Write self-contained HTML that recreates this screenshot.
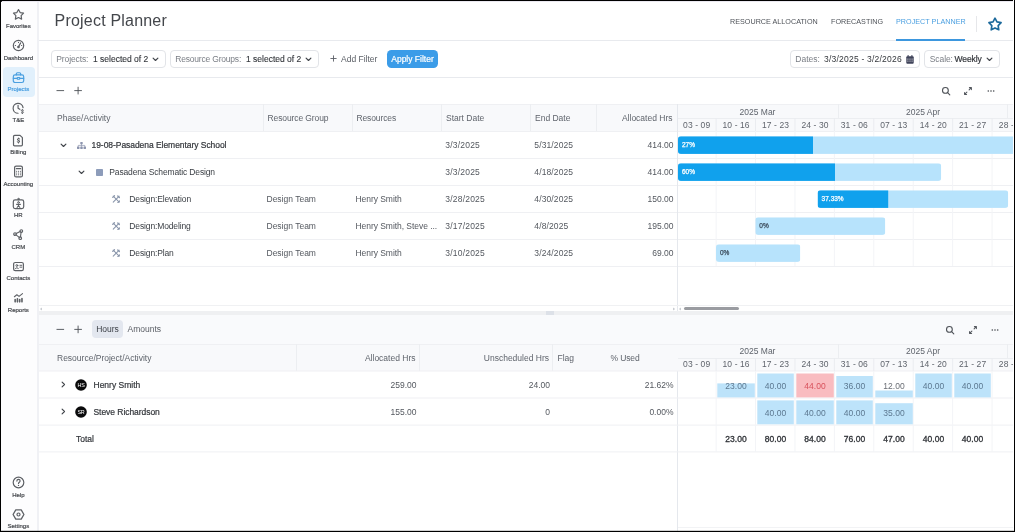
<!DOCTYPE html>
<html>
<head>
<meta charset="utf-8">
<title>Project Planner</title>
<style>
*{box-sizing:border-box;margin:0;padding:0}
html,body{width:1015px;height:532px;overflow:hidden;background:#fff}
body{font-family:"Liberation Sans",sans-serif;color:#3c4043;position:relative}
.a{position:absolute}
#app{position:absolute;left:0;top:0;width:1015px;height:532px;background:#fff;overflow:hidden;will-change:transform}
#side{position:absolute;left:0;top:0;width:39px;height:532px;background:#fdfdfe;border-right:2px solid #f0f1f5}
.si{position:absolute;left:1px;width:36px;height:31px}
.si svg{position:absolute;left:11.1px;top:2.7px;width:13px;height:13px;stroke:#5d6065;fill:none;stroke-width:1.1;stroke-linecap:round;stroke-linejoin:round}
.si span{position:absolute;left:-8.7px;width:52px;top:18.2px;font-size:6px;line-height:7px;color:#45484d;-webkit-text-stroke:.2px #45484d;text-align:center}
.si.on svg{stroke:#4a9fe0}
.si.on span{color:#4a9fe0;-webkit-text-stroke:.22px #4a9fe0}
#sel{position:absolute;left:3px;top:67px;width:32px;height:30px;background:#e1f0fc;border-radius:4px}
.t{position:absolute;white-space:nowrap;font-size:8.5px;line-height:10px;color:#54585f}
.t.h{color:#5f646c}
.t.sb{color:#33363b;-webkit-text-stroke:.2px #33363b}
.t.tab{font-size:7.2px;color:#4e5258;letter-spacing:.02px}
.hl{position:absolute;height:1px;background:#e9ecf1}
.vl{position:absolute;width:1px;background:#e9ecf1}
.chip{position:absolute;top:50px;height:18px;border:1px solid #e2e4e8;border-radius:4px;background:#fff}
.chip .t{top:3.2px}
.t.lbl{color:#7a7e85}
.t.val{color:#33363b;-webkit-text-stroke:.12px #33363b}
.bar{position:absolute;height:18px;border-radius:3px;background:#b7e3fc;overflow:hidden}
.bar i{position:absolute;left:0;top:0;height:18px;background:#10a1ed;display:block}
.bar span{position:absolute;left:4px;top:5.1px;font-size:6.5px;line-height:8px;color:#fff;-webkit-text-stroke:.25px #fff;font-style:normal}
.bar span.d{color:#3a4a5a;-webkit-text-stroke:.25px #3a4a5a}
.cell{position:absolute;background:#bde3fa}
.cell.red{background:#f9bcc0}
.n{position:absolute;white-space:nowrap;font-size:8.5px;line-height:10px;color:#5c7890;text-align:center}
.n.red{color:#d8525c}
.n.k2{color:#6a6e75}
.n.tb{color:#2f3237;-webkit-text-stroke:.3px #2f3237}
.bl{position:absolute;white-space:nowrap;font-size:6.5px;line-height:8px;color:#fff;-webkit-text-stroke:.25px #fff}
.bl.d{color:#3a4a5a;-webkit-text-stroke:.25px #3a4a5a}

</style>
</head>
<body>
<div id="app">
<div class="t " style="left:54.6px;top:11.1px;font-size:16px;line-height:20px;color:#43464b;letter-spacing:.2px">Project Planner</div>
<div class="hl" style="left:37px;top:40px;width:978px;height:1px;background:#e8eaee;"></div>
<div class="t tab" style="left:730px;top:16.6px;">RESOURCE ALLOCATION</div>
<div class="t tab" style="left:831px;top:16.6px;">FORECASTING</div>
<div class="t tab" style="left:896px;top:16.6px;color:#4a9fe0">PROJECT PLANNER</div>
<div class="a" style="left:896px;top:39px;width:69px;height:2px;background:#3d97de"></div>
<div class="vl" style="left:976px;top:16px;height:16px;width:1px;background:#e6e7ea;"></div>
<svg class="a" style="left:986.9px;top:15.6px" width="16" height="16" viewBox="0 0 24 24" fill="none" stroke="#1d6a9c" stroke-width="2.5" stroke-linejoin="round"><path d="M12.00 3.30 L14.94 8.85 L21.13 9.93 L16.76 14.45 L17.64 20.67 L12.00 17.90 L6.36 20.67 L7.24 14.45 L2.87 9.93 L9.06 8.85z"/></svg>
<div class="hl" style="left:37px;top:77px;width:978px;height:1px;background:#e8eaee;"></div>
<div class="chip" style="left:51px;width:115px"><div class="t lbl" style="left:4.3px;letter-spacing:-.12px">Projects:</div><div class="t val" style="left:41px">1 selected of 2</div><svg class="a" style="left:99.5px;top:5.5px" width="7" height="5" viewBox="0 0 7 5" fill="none" stroke="#40444a" stroke-width="1.15" stroke-linecap="round" stroke-linejoin="round"><path d="M1.100 1.100l2.400 2.400L5.900 1.100"/></svg></div>
<div class="chip" style="left:170px;width:149px"><div class="t lbl" style="left:4.3px;letter-spacing:-.2px">Resource Groups:</div><div class="t val" style="left:75px">1 selected of 2</div><svg class="a" style="left:133.5px;top:5.5px" width="7" height="5" viewBox="0 0 7 5" fill="none" stroke="#40444a" stroke-width="1.15" stroke-linecap="round" stroke-linejoin="round"><path d="M1.100 1.100l2.400 2.400L5.900 1.100"/></svg></div>
<svg class="a" style="left:329px;top:54px" width="9" height="9" viewBox="0 0 9 9" stroke="#5a5e65" stroke-width=".9" fill="none" stroke-linecap="round"><path d="M4.500 1.800v5.400M1.800 4.500h5.400"/></svg>
<div class="t " style="left:341px;top:53.6px;color:#5a5e65">Add Filter</div>
<div class="a" style="left:387px;top:50px;width:51px;height:18px;border-radius:4.500px;background:#3b9ce8"></div>
<div class="t " style="left:382.5px;top:54.1px;width:60px;text-align:center;color:#fff;-webkit-text-stroke:.2px #fff">Apply Filter</div>
<div class="chip" style="left:790px;width:130px"><div class="t lbl" style="left:4.3px">Dates:</div><div class="t val" style="left:33px;letter-spacing:.22px;-webkit-text-stroke:0">3/3/2025 - 3/2/2026</div><svg class="a" style="left:114.5px;top:3.5px" width="8" height="9" viewBox="0 0 8 9"><rect x=".3" y="1.2" width="7.4" height="7.5" rx="1" fill="#3f435a"/><rect x="1.6" y="0" width="1" height="2.2" fill="#3f435a"/><rect x="5.4" y="0" width="1" height="2.2" fill="#3f435a"/><g fill="#fff" opacity=".75"><rect x="1.3" y="3.6" width="1.2" height="1"/><rect x="3.4" y="3.6" width="1.2" height="1"/><rect x="5.5" y="3.6" width="1.2" height="1"/><rect x="1.3" y="5.6" width="1.2" height="1"/><rect x="3.4" y="5.6" width="1.2" height="1"/><rect x="5.5" y="5.6" width="1.2" height="1"/></g></svg></div>
<div class="chip" style="left:924px;width:76px"><div class="t lbl" style="left:4.8px;letter-spacing:-.1px">Scale:</div><div class="t val" style="left:29.6px;letter-spacing:-.12px;-webkit-text-stroke:.2px #33363b">Weekly</div><svg class="a" style="left:61px;top:5.5px" width="7" height="5" viewBox="0 0 7 5" fill="none" stroke="#40444a" stroke-width="1.15" stroke-linecap="round" stroke-linejoin="round"><path d="M1.100 1.100l2.400 2.400L5.900 1.100"/></svg></div>
<svg class="a" style="left:55px;top:85px" width="30" height="11" viewBox="0 0 30 11" stroke="#4b4f55" stroke-width=".9" fill="none" stroke-linecap="round"><path d="M1.900 5.6h6.800"/><path d="M19.700 5.6h6.800M23.100 2.2v6.800"/></svg>
<svg class="a" style="left:941px;top:85.5px" width="10" height="10" viewBox="0 0 10 10" stroke="#4d5157" stroke-width="1.1" fill="none" stroke-linecap="round"><circle cx="4.4" cy="4.4" r="2.900"/><path d="M6.600 6.600L8.800 8.800"/></svg>
<svg class="a" style="left:963px;top:85.5px" width="10" height="10" viewBox="0 0 10 10" stroke="#54585e" stroke-width=".9" fill="none" stroke-linecap="round" stroke-linejoin="round"><path d="M6.400 1.600h2V3.600M8.300 1.700L6.100 3.900M3.600 8.400H1.600V6.400M1.700 8.300l2.200-2.200" stroke-width="1.050"/></svg>
<svg class="a" style="left:985.5px;top:85.5px" width="10" height="10" viewBox="0 0 10 10" fill="#43474d"><circle cx="2.3" cy="5" r=".8"/><circle cx="5" cy="5" r=".8"/><circle cx="7.7" cy="5" r=".8"/></svg>
<div class="a" style="left:38px;top:104px;width:977px;height:27px;background:#f8f9fb"></div>
<div class="hl" style="left:38px;top:104px;width:977px;height:1px;background:#eff0f3;"></div>
<div class="hl" style="left:38px;top:131px;width:977px;height:1px;background:#eff0f3;"></div>
<div class="hl" style="left:38px;top:158px;width:977px;height:1px;background:#eff0f3;"></div>
<div class="hl" style="left:38px;top:185px;width:977px;height:1px;background:#eff0f3;"></div>
<div class="hl" style="left:38px;top:212px;width:977px;height:1px;background:#eff0f3;"></div>
<div class="hl" style="left:38px;top:239px;width:977px;height:1px;background:#eff0f3;"></div>
<div class="hl" style="left:38px;top:266px;width:977px;height:1px;background:#eff0f3;"></div>
<div class="t h" style="left:57px;top:113.3px;">Phase/Activity</div>
<div class="t h" style="left:267.5px;top:113.3px;letter-spacing:-.1px">Resource Group</div>
<div class="t h" style="left:356.4px;top:113.3px;letter-spacing:-.1px">Resources</div>
<div class="t h" style="left:446px;top:113.3px;">Start Date</div>
<div class="t h" style="left:535px;top:113.3px;">End Date</div>
<div class="t h" style="right:342.5px;top:113.3px;">Allocated Hrs</div>
<div class="vl" style="left:263px;top:104px;height:27px;width:1px;background:#eceef1;"></div>
<div class="vl" style="left:352px;top:104px;height:27px;width:1px;background:#eceef1;"></div>
<div class="vl" style="left:441px;top:104px;height:27px;width:1px;background:#eceef1;"></div>
<div class="vl" style="left:530px;top:104px;height:27px;width:1px;background:#eceef1;"></div>
<div class="vl" style="left:596px;top:104px;height:27px;width:1px;background:#eceef1;"></div>
<svg class="a" style="left:59.8px;top:143.0px" width="7" height="5" viewBox="0 0 7 5" fill="none" stroke="#40444a" stroke-width="1.15" stroke-linecap="round" stroke-linejoin="round"><path d="M1.100 1.100l2.400 2.400L5.900 1.100"/></svg>
<svg class="a" style="left:76.8px;top:142px" width="9" height="7" viewBox="0 0 9 7" fill="#8c94ae"><rect x="3.3" y="0" width="2.4" height="2.2" rx=".4"/><rect x="0" y="4.5" width="2.5" height="2.5" rx=".4"/><rect x="3.25" y="4.5" width="2.5" height="2.5" rx=".4"/><rect x="6.5" y="4.5" width="2.5" height="2.5" rx=".4"/><path d="M4.5 2v1.400M1.250 4.600V3.400h6.500V4.600M4.500 3.400v1.200" stroke="#8c94ae" stroke-width=".7" fill="none"/></svg>
<div class="t sb" style="left:91.5px;top:140.3px;letter-spacing:-.05px">19-08-Pasadena Elementary School</div>
<svg class="a" style="left:77.8px;top:170.0px" width="7" height="5" viewBox="0 0 7 5" fill="none" stroke="#40444a" stroke-width="1.15" stroke-linecap="round" stroke-linejoin="round"><path d="M1.100 1.100l2.400 2.400L5.900 1.100"/></svg>
<div class="a" style="left:95.7px;top:168.8px;width:7px;height:6.8px;background:#8d9cba;border-radius:.8px"></div>
<div class="t " style="left:109.3px;top:167.3px;letter-spacing:-.14px;color:#3c4046">Pasadena Schematic Design</div>
<svg class="a" style="left:111.9px;top:195.1px" width="8.4" height="8.4" viewBox="0 0 9 9" fill="none" stroke="#8a96ab" stroke-width="1.1" stroke-linecap="round"><path d="M1.3 1.3l6.4 6.4"/><path d="M7.7 1.3L1.3 7.7"/><path d="M.8 2.6L2.6.8M6.3 8.2l1.9-1.9" stroke-width="1.3"/><path d="M6.2 1l1.8 1.8" stroke-width="1.4"/></svg>
<div class="t " style="left:129.3px;top:194.3px;color:#3c4046;letter-spacing:-.13px">Design:Elevation</div>
<div class="t " style="left:266.5px;top:194.3px;">Design Team</div>
<div class="t " style="left:355.5px;top:194.3px;letter-spacing:-.05px">Henry Smith</div>
<svg class="a" style="left:111.9px;top:222.1px" width="8.4" height="8.4" viewBox="0 0 9 9" fill="none" stroke="#8a96ab" stroke-width="1.1" stroke-linecap="round"><path d="M1.3 1.3l6.4 6.4"/><path d="M7.7 1.3L1.3 7.7"/><path d="M.8 2.6L2.6.8M6.3 8.2l1.9-1.9" stroke-width="1.3"/><path d="M6.2 1l1.8 1.8" stroke-width="1.4"/></svg>
<div class="t " style="left:129.3px;top:221.3px;color:#3c4046;letter-spacing:-.13px">Design:Modeling</div>
<div class="t " style="left:266.5px;top:221.3px;">Design Team</div>
<div class="t " style="left:355.5px;top:221.3px;letter-spacing:-.05px">Henry Smith, Steve ...</div>
<svg class="a" style="left:111.9px;top:249.1px" width="8.4" height="8.4" viewBox="0 0 9 9" fill="none" stroke="#8a96ab" stroke-width="1.1" stroke-linecap="round"><path d="M1.3 1.3l6.4 6.4"/><path d="M7.7 1.3L1.3 7.7"/><path d="M.8 2.6L2.6.8M6.3 8.2l1.9-1.9" stroke-width="1.3"/><path d="M6.2 1l1.8 1.8" stroke-width="1.4"/></svg>
<div class="t " style="left:129.3px;top:248.3px;color:#3c4046;letter-spacing:-.13px">Design:Plan</div>
<div class="t " style="left:266.5px;top:248.3px;">Design Team</div>
<div class="t " style="left:355.5px;top:248.3px;letter-spacing:-.05px">Henry Smith</div>
<div class="t " style="left:445.3px;top:140.3px;letter-spacing:.2px">3/3/2025</div>
<div class="t " style="left:534.3px;top:140.3px;letter-spacing:.12px">5/31/2025</div>
<div class="t " style="right:341.5px;top:140.3px;">414.00</div>
<div class="t " style="left:445.3px;top:167.3px;letter-spacing:.2px">3/3/2025</div>
<div class="t " style="left:534.3px;top:167.3px;letter-spacing:.12px">4/18/2025</div>
<div class="t " style="right:341.5px;top:167.3px;">414.00</div>
<div class="t " style="left:445.3px;top:194.3px;letter-spacing:.2px">3/28/2025</div>
<div class="t " style="left:534.3px;top:194.3px;letter-spacing:.12px">4/30/2025</div>
<div class="t " style="right:341.5px;top:194.3px;">150.00</div>
<div class="t " style="left:445.3px;top:221.3px;letter-spacing:.2px">3/17/2025</div>
<div class="t " style="left:534.3px;top:221.3px;letter-spacing:.12px">4/8/2025</div>
<div class="t " style="right:341.5px;top:221.3px;">195.00</div>
<div class="t " style="left:445.3px;top:248.3px;letter-spacing:.2px">3/10/2025</div>
<div class="t " style="left:534.3px;top:248.3px;letter-spacing:.12px">3/24/2025</div>
<div class="t " style="right:341.5px;top:248.3px;">69.00</div>
<div class="vl" style="left:677px;top:104px;height:207px;width:1px;background:#e5e8ed;"></div>
<div class="vl" style="left:677px;top:344px;height:188px;width:1px;background:#e5e8ed;"></div>
<div class="hl" style="left:678px;top:118px;width:338px;height:1px;background:#eceef1;"></div>
<div class="vl" style="left:838px;top:104px;height:14px;width:1px;background:#eceef1;"></div>
<div class="vl" style="left:1007px;top:104px;height:14px;width:1px;background:#eceef1;"></div>
<div class="t h" style="left:717.5px;top:107.0px;width:80px;text-align:center;">2025 Mar</div>
<div class="t h" style="left:883.0px;top:107.0px;width:80px;text-align:center;">2025 Apr</div>
<div class="t h" style="left:676.71px;top:120.0px;width:40px;text-align:center;letter-spacing:.1px">03 - 09</div>
<div class="t h" style="left:716.13px;top:120.0px;width:40px;text-align:center;letter-spacing:.1px">10 - 16</div>
<div class="t h" style="left:755.55px;top:120.0px;width:40px;text-align:center;letter-spacing:.1px">17 - 23</div>
<div class="t h" style="left:794.97px;top:120.0px;width:40px;text-align:center;letter-spacing:.1px">24 - 30</div>
<div class="t h" style="left:834.39px;top:120.0px;width:40px;text-align:center;letter-spacing:.1px">31 - 06</div>
<div class="t h" style="left:873.81px;top:120.0px;width:40px;text-align:center;letter-spacing:.1px">07 - 13</div>
<div class="t h" style="left:913.23px;top:120.0px;width:40px;text-align:center;letter-spacing:.1px">14 - 20</div>
<div class="t h" style="left:952.6500000000001px;top:120.0px;width:40px;text-align:center;letter-spacing:.1px">21 - 27</div>
<div class="t h" style="left:998.86px;top:120.0px;letter-spacing:.1px">28 - 04</div>
<svg class="a" style="left:0;top:0" width="1015" height="532"><rect x="715.62" y="118" width="1" height="13" fill="#eaecf0"/><rect x="755.04" y="118" width="1" height="13" fill="#eaecf0"/><rect x="794.46" y="118" width="1" height="13" fill="#eaecf0"/><rect x="833.88" y="118" width="1" height="13" fill="#eaecf0"/><rect x="873.3" y="118" width="1" height="13" fill="#eaecf0"/><rect x="912.72" y="118" width="1" height="13" fill="#eaecf0"/><rect x="952.14" y="118" width="1" height="13" fill="#eaecf0"/><rect x="991.56" y="118" width="1" height="13" fill="#eaecf0"/><rect x="715.62" y="131" width="1" height="135" fill="#f3f4f7"/><rect x="755.04" y="131" width="1" height="135" fill="#f3f4f7"/><rect x="794.46" y="131" width="1" height="135" fill="#f3f4f7"/><rect x="833.88" y="131" width="1" height="135" fill="#f3f4f7"/><rect x="873.3" y="131" width="1" height="135" fill="#f3f4f7"/><rect x="912.72" y="131" width="1" height="135" fill="#f3f4f7"/><rect x="952.14" y="131" width="1" height="135" fill="#f3f4f7"/><rect x="991.56" y="131" width="1" height="135" fill="#f3f4f7"/><clipPath id="c0"><rect x="678" y="136.3" width="345" height="17.6" rx="3"/></clipPath><g clip-path="url(#c0)"><rect x="678" y="136.3" width="335" height="17.6" fill="#b7e3fc"/><rect x="678" y="136.3" width="135" height="17.6" fill="#10a1ed"/></g><clipPath id="c1"><rect x="678" y="163.3" width="263.2" height="17.6" rx="3"/></clipPath><g clip-path="url(#c1)"><rect x="678" y="163.3" width="263.2" height="17.6" fill="#b7e3fc"/><rect x="678" y="163.3" width="157" height="17.6" fill="#10a1ed"/></g><clipPath id="c2"><rect x="817.6" y="190.3" width="190.6" height="17.6" rx="3"/></clipPath><g clip-path="url(#c2)"><rect x="817.6" y="190.3" width="190.6" height="17.6" fill="#b7e3fc"/><rect x="817.6" y="190.3" width="70.6" height="17.6" fill="#10a1ed"/></g><clipPath id="c3"><rect x="755.3" y="217.3" width="130" height="17.6" rx="3"/></clipPath><g clip-path="url(#c3)"><rect x="755.3" y="217.3" width="130" height="17.6" fill="#b7e3fc"/></g><clipPath id="c4"><rect x="716" y="244.3" width="84.3" height="17.6" rx="3"/></clipPath><g clip-path="url(#c4)"><rect x="716" y="244.3" width="84.3" height="17.6" fill="#b7e3fc"/></g></svg>
<div class="bl" style="left:682px;top:141.4px">27%</div>
<div class="bl" style="left:682px;top:168.4px">60%</div>
<div class="bl" style="left:821.6px;top:195.4px">37.33%</div>
<div class="bl d" style="left:759.3px;top:222.4px">0%</div>
<div class="bl d" style="left:720px;top:249.4px">0%</div>
<div class="hl" style="left:38px;top:305px;width:977px;height:1px;background:#f0f1f3;"></div>
<div class="a" style="left:38px;top:311px;width:977px;height:4px;background:#eff0f2"></div>
<div class="a" style="left:684px;top:307px;width:55px;height:3px;background:#9a9ca1;border-radius:2px"></div>
<div class="a" style="left:546px;top:311px;width:7.5px;height:3.5px;background:#dde1e8"></div>
<svg class="a" style="left:39px;top:306.5px" width="4" height="4" viewBox="0 0 4 4" fill="#c9ccd2"><path d="M3 .5v3L.8 2z"/></svg>
<svg class="a" style="left:672px;top:306.5px" width="4" height="4" viewBox="0 0 4 4" fill="#c9ccd2"><path d="M1 .5v3L3.2 2z"/></svg>
<svg class="a" style="left:678px;top:306.5px" width="4" height="4" viewBox="0 0 4 4" fill="#c9ccd2"><path d="M3 .5v3L.8 2z"/></svg>
<div class="a" style="left:38px;top:315px;width:977px;height:29px;background:#f9fafc"></div>
<svg class="a" style="left:55px;top:324px" width="30" height="11" viewBox="0 0 30 11" stroke="#4b4f55" stroke-width=".9" fill="none" stroke-linecap="round"><path d="M1.900 5.4h6.800"/><path d="M19.700 5.4h6.800M23.100 2.0v6.800"/></svg>
<div class="a" style="left:92px;top:320px;width:30.5px;height:18px;background:#e3e7ef;border-radius:4px"></div>
<div class="t " style="left:87.5px;top:324.3px;width:40px;text-align:center;color:#3a3e45">Hours</div>
<div class="t " style="left:127.5px;top:324.3px;color:#5a5e65">Amounts</div>
<svg class="a" style="left:945px;top:324.5px" width="10" height="10" viewBox="0 0 10 10" stroke="#4d5157" stroke-width="1.1" fill="none" stroke-linecap="round"><circle cx="4.4" cy="4.4" r="2.900"/><path d="M6.600 6.600L8.800 8.800"/></svg>
<svg class="a" style="left:968px;top:324.5px" width="10" height="10" viewBox="0 0 10 10" stroke="#54585e" stroke-width=".9" fill="none" stroke-linecap="round" stroke-linejoin="round"><path d="M6.400 1.600h2V3.600M8.300 1.700L6.100 3.900M3.600 8.400H1.600V6.400M1.700 8.300l2.200-2.200" stroke-width="1.050"/></svg>
<svg class="a" style="left:990.2px;top:324.5px" width="10" height="10" viewBox="0 0 10 10" fill="#43474d"><circle cx="2.3" cy="5" r=".8"/><circle cx="5" cy="5" r=".8"/><circle cx="7.7" cy="5" r=".8"/></svg>
<div class="a" style="left:38px;top:344px;width:977px;height:26.5px;background:#f8f9fb"></div>
<div class="hl" style="left:38px;top:344px;width:977px;height:1px;background:#eff0f3;"></div>
<div class="t h" style="left:57px;top:352.8px;">Resource/Project/Activity</div>
<div class="t h" style="right:599.5px;top:352.8px;">Allocated Hrs</div>
<div class="t h" style="right:466px;top:352.8px;">Unscheduled Hrs</div>
<div class="t h" style="left:557.5px;top:352.8px;">Flag</div>
<div class="t h" style="left:610.5px;top:352.8px;letter-spacing:-.12px">% Used</div>
<div class="vl" style="left:296px;top:344px;height:27px;width:1px;background:#eceef1;"></div>
<div class="vl" style="left:419px;top:344px;height:27px;width:1px;background:#eceef1;"></div>
<div class="vl" style="left:552px;top:344px;height:27px;width:1px;background:#eceef1;"></div>
<div class="hl" style="left:678px;top:358px;width:338px;height:1px;background:#eceef1;"></div>
<div class="vl" style="left:838px;top:344px;height:14px;width:1px;background:#eceef1;"></div>
<div class="vl" style="left:1007px;top:344px;height:14px;width:1px;background:#eceef1;"></div>
<div class="t h" style="left:717.5px;top:346.0px;width:80px;text-align:center;">2025 Mar</div>
<div class="t h" style="left:883.0px;top:346.0px;width:80px;text-align:center;">2025 Apr</div>
<div class="t h" style="left:676.71px;top:359.0px;width:40px;text-align:center;letter-spacing:.1px">03 - 09</div>
<div class="t h" style="left:716.13px;top:359.0px;width:40px;text-align:center;letter-spacing:.1px">10 - 16</div>
<div class="t h" style="left:755.55px;top:359.0px;width:40px;text-align:center;letter-spacing:.1px">17 - 23</div>
<div class="t h" style="left:794.97px;top:359.0px;width:40px;text-align:center;letter-spacing:.1px">24 - 30</div>
<div class="t h" style="left:834.39px;top:359.0px;width:40px;text-align:center;letter-spacing:.1px">31 - 06</div>
<div class="t h" style="left:873.81px;top:359.0px;width:40px;text-align:center;letter-spacing:.1px">07 - 13</div>
<div class="t h" style="left:913.23px;top:359.0px;width:40px;text-align:center;letter-spacing:.1px">14 - 20</div>
<div class="t h" style="left:952.6500000000001px;top:359.0px;width:40px;text-align:center;letter-spacing:.1px">21 - 27</div>
<div class="t h" style="left:998.86px;top:359.0px;letter-spacing:.1px">28 - 04</div>
<svg class="a" style="left:60.8px;top:381.3px" width="5" height="7" viewBox="0 0 5 7" fill="none" stroke="#40444a" stroke-width="1.15" stroke-linecap="round" stroke-linejoin="round"><path d="M1.100 1.100l2.400 2.400L1.100 5.900"/></svg>
<svg class="a" style="left:60.8px;top:408.3px" width="5" height="7" viewBox="0 0 5 7" fill="none" stroke="#40444a" stroke-width="1.15" stroke-linecap="round" stroke-linejoin="round"><path d="M1.100 1.100l2.400 2.400L1.100 5.900"/></svg>
<svg class="a" style="left:75px;top:379.2px" width="12" height="12" viewBox="0 0 12 12"><circle cx="6" cy="6" r="5.8" fill="#0a0a0b"/><text x="6" y="7.8" text-anchor="middle" font-family="Liberation Sans" font-size="5.4" fill="#fff" letter-spacing="-.15">HS</text></svg>
<svg class="a" style="left:75px;top:406.2px" width="12" height="12" viewBox="0 0 12 12"><circle cx="6" cy="6" r="5.8" fill="#0a0a0b"/><text x="6" y="7.8" text-anchor="middle" font-family="Liberation Sans" font-size="5.4" fill="#fff" letter-spacing="-.15">SR</text></svg>
<div class="t sb" style="left:93.5px;top:379.8px;">Henry Smith</div>
<div class="t sb" style="left:93.5px;top:406.8px;letter-spacing:-.05px">Steve Richardson</div>
<div class="t sb" style="left:76px;top:433.8px;">Total</div>
<div class="t " style="right:598.5px;top:379.8px;">259.00</div>
<div class="t " style="right:465px;top:379.8px;">24.00</div>
<div class="t " style="right:341.5px;top:379.8px;">21.62%</div>
<div class="t " style="right:598.5px;top:406.8px;">155.00</div>
<div class="t " style="right:465px;top:406.8px;">0</div>
<div class="t " style="right:341.5px;top:406.8px;">0.00%</div>
<svg class="a" style="left:0;top:0" width="1015" height="532"><rect x="39" y="370.5" width="975" height="1" fill="#eff0f3"/><rect x="39" y="397.5" width="975" height="1" fill="#eff0f3"/><rect x="39" y="424.6" width="975" height="1" fill="#eff0f3"/><rect x="39" y="451.4" width="975" height="1" fill="#eff0f3"/><rect x="715.62" y="358" width="1" height="13" fill="#eaecf0"/><rect x="755.04" y="358" width="1" height="13" fill="#eaecf0"/><rect x="794.46" y="358" width="1" height="13" fill="#eaecf0"/><rect x="833.88" y="358" width="1" height="13" fill="#eaecf0"/><rect x="873.3" y="358" width="1" height="13" fill="#eaecf0"/><rect x="912.72" y="358" width="1" height="13" fill="#eaecf0"/><rect x="952.14" y="358" width="1" height="13" fill="#eaecf0"/><rect x="991.56" y="358" width="1" height="13" fill="#eaecf0"/><rect x="715.62" y="371" width="1" height="81" fill="#f3f4f7"/><rect x="755.04" y="371" width="1" height="81" fill="#f3f4f7"/><rect x="794.46" y="371" width="1" height="81" fill="#f3f4f7"/><rect x="833.88" y="371" width="1" height="81" fill="#f3f4f7"/><rect x="873.3" y="371" width="1" height="81" fill="#f3f4f7"/><rect x="912.72" y="371" width="1" height="81" fill="#f3f4f7"/><rect x="952.14" y="371" width="1" height="81" fill="#f3f4f7"/><rect x="991.56" y="371" width="1" height="81" fill="#f3f4f7"/><rect x="717.3" y="383.4" width="37.5" height="14.0" fill="#bde3fa"/><rect x="757.3" y="373.5" width="36.5" height="23.9" fill="#bde3fa"/><rect x="796.3" y="373.5" width="37.5" height="23.9" fill="#f9bcc0"/><rect x="836.3" y="376" width="36.5" height="21.4" fill="#bde3fa"/><rect x="875.3" y="390.5" width="37.5" height="6.9" fill="#bde3fa"/><rect x="915.3" y="373.5" width="36.5" height="23.9" fill="#bde3fa"/><rect x="954.3" y="373.5" width="36.5" height="23.9" fill="#bde3fa"/><rect x="757.3" y="400.4" width="36.5" height="23.9" fill="#bde3fa"/><rect x="796.3" y="400.4" width="37.5" height="23.9" fill="#bde3fa"/><rect x="836.3" y="400.4" width="36.5" height="23.9" fill="#bde3fa"/><rect x="875.3" y="403.2" width="37.5" height="21.1" fill="#bde3fa"/></svg>
<div class="n " style="left:716.0px;top:380.7px;width:40px">23.00</div>
<div class="n " style="left:755.5px;top:380.7px;width:40px">40.00</div>
<div class="n red" style="left:795.0px;top:380.7px;width:40px">44.00</div>
<div class="n " style="left:834.5px;top:380.7px;width:40px">36.00</div>
<div class="n k2" style="left:874.0px;top:380.7px;width:40px">12.00</div>
<div class="n " style="left:913.5px;top:380.7px;width:40px">40.00</div>
<div class="n " style="left:952.5px;top:380.7px;width:40px">40.00</div>
<div class="n " style="left:755.5px;top:407.7px;width:40px">40.00</div>
<div class="n " style="left:795.0px;top:407.7px;width:40px">40.00</div>
<div class="n " style="left:834.5px;top:407.7px;width:40px">40.00</div>
<div class="n " style="left:874.0px;top:407.7px;width:40px">35.00</div>
<div class="n tb" style="left:716.0px;top:434.2px;width:40px">23.00</div>
<div class="n tb" style="left:755.5px;top:434.2px;width:40px">80.00</div>
<div class="n tb" style="left:795.0px;top:434.2px;width:40px">84.00</div>
<div class="n tb" style="left:834.5px;top:434.2px;width:40px">76.00</div>
<div class="n tb" style="left:874.0px;top:434.2px;width:40px">47.00</div>
<div class="n tb" style="left:913.5px;top:434.2px;width:40px">40.00</div>
<div class="n tb" style="left:952.5px;top:434.2px;width:40px">40.00</div>
<div class="hl" style="left:678px;top:527px;width:335px;height:1px;background:#f2f3f5;"></div>
<div id="side">
<div id="sel"></div>
<div class="si" style="top:5.0px"><svg viewBox="0 0 12 12"><path d="M6.00 1.40 L7.50 4.24 L10.66 4.79 L8.43 7.09 L8.88 10.26 L6.00 8.85 L3.12 10.26 L3.57 7.09 L1.34 4.79 L4.50 4.24z"/></svg><span>Favorites</span></div>
<div class="si" style="top:36.599999999999994px"><svg viewBox="0 0 12 12"><circle cx="6" cy="6" r="4.8"/><path d="M6 7.2l2-3.6"/><circle cx="6" cy="7.4" r=".7"/><path d="M3 6h.3M6 3v.3M9 6h-.3" stroke-width="1"/></svg><span>Dashboard</span></div>
<div class="si on" style="top:68.2px"><svg viewBox="0 0 12 12"><rect x="1.2" y="3.6" width="9.6" height="7" rx="1.6"/><path d="M4 3.6V2.6a1 1 0 011-1h2a1 1 0 011 1v1M1.2 6.8h3.6M7.2 6.8h3.6"/><rect x="4.8" y="6" width="2.4" height="1.6" rx=".4" stroke-width="1"/></svg><span>Projects</span></div>
<div class="si" style="top:99.0px"><svg viewBox="0 0 12 12"><path d="M10.2 5.2A4.6 4.6 0 105.6 10.4"/><path d="M5.6 3v2.8l1.6 1"/><path d="M10.6 7.6c-.4-.5-2-.5-2 .4s2 .5 2 1.4-1.700 1-2.100.4M9.600 7v.4M9.600 10.200v.5" stroke-width=".9"/></svg><span>T&amp;E</span></div>
<div class="si" style="top:131.20000000000002px"><svg viewBox="0 0 12 12"><path d="M2.4 1.200h5l2.200 2.200v6.600a1 1 0 01-1 1h-6.200a1 1 0 01-1-1v-7.800a1 1 0 011-1z"/><path d="M7 4.600c-.4-.5-2-.5-2 .5s2 .6 2 1.600-1.700 1-2.100.4M6 3.800v.5M6 7.600v.6" stroke-width=".95"/></svg><span>Billing</span></div>
<div class="si" style="top:162.70000000000002px"><svg viewBox="0 0 12 12"><rect x="2.400" y="1" width="7.200" height="10" rx="1.400"/><path d="M4 3.400h4" /><path d="M4.200 5.800h.1M6 5.800h.1M7.800 5.800h.1M4.200 7.400h.1M6 7.400h.1M7.800 7.400h.1M4.200 9h.1M6 9h.1M7.800 9h.1" stroke-width="1"/></svg><span>Accounting</span></div>
<div class="si" style="top:194.20000000000002px"><svg viewBox="0 0 12 12"><rect x="1.200" y="2.600" width="9.600" height="8.200" rx="1.700"/><circle cx="6" cy="1.900" r=".8" fill="#62656a" stroke-width=".6"/><circle cx="6" cy="5" r=".8" stroke-width=".9"/><path d="M4.200 6.800h3.600M6 6.800v1.200M6 8l-1.300 1.700M6 8l1.300 1.700" stroke-width=".95"/></svg><span>HR</span></div>
<div class="si" style="top:225.70000000000002px"><svg viewBox="0 0 12 12"><circle cx="8.600" cy="2.800" r="1.200"/><circle cx="2.800" cy="5.600" r="1.200"/><circle cx="7.600" cy="9.400" r="1.200"/><path d="M3.900 5.100l3.600-1.800M3.700 6.400l3 2.300M8.400 4l-.6 4.200" stroke-width="1"/></svg><span>CRM</span></div>
<div class="si" style="top:257.2px"><svg viewBox="0 0 12 12"><rect x="1.500" y="2.300" width="9" height="7.500" rx="1.500"/><circle cx="4.500" cy="5.100" r=".85" stroke-width=".9"/><path d="M3.100 8c.2-1.200 2.600-1.200 2.800 0M7.300 4.900h1.700M7.300 6.600h1.700" stroke-width=".9"/></svg><span>Contacts</span></div>
<div class="si" style="top:288.7px"><svg viewBox="0 0 12 12"><path d="M2.200 5.300l2.300-1.800 2 1.500 3.200-2.600" stroke-width="1"/><path d="M2.900 7.800v2.200M5 7.200v2.800M7.100 7.800v2.200M9.200 7v3" stroke-width="1.500"/></svg><span>Reports</span></div>
<div class="si" style="top:473.8px"><svg viewBox="0 0 12 12"><circle cx="6" cy="6" r="4.900"/><path d="M4.500 4.700c0-2 3-2 3 0 0 1-1.500 1.100-1.500 2.200" stroke-width="1.100"/><path d="M6 8.600v.1" stroke-width="1.200"/></svg><span>Help</span></div>
<div class="si" style="top:505.3px"><svg viewBox="0 0 12 12"><path d="M11.00 6.00 L8.50 10.33 L3.50 10.33 L1.00 6.00 L3.50 1.67 L8.50 1.67 L11.00 6.00z" stroke-width="1.2"/><circle cx="6" cy="6" r="1.4" stroke-width="1.1"/></svg><span>Settings</span></div>
</div>
<div class="a" style="left:1px;top:1px;width:1013px;height:1px;background:#ebe9f1"></div>
<div class="a" style="left:1px;top:1px;width:1px;height:1px;background:#333"></div>
<div class="a" style="left:0;top:0;width:1015px;height:1px;background:#000"></div>
<div class="a" style="left:0;top:0;width:1px;height:532px;background:#000"></div>
<div class="a" style="left:1013px;top:0;width:2px;height:532px;background:linear-gradient(90deg,#fff 50%,#000 50%)"></div>
<div class="a" style="left:0;top:530px;width:1015px;height:2px;background:linear-gradient(180deg,rgba(0,0,0,.18) 50%,#000 50%)"></div>
</div>
</body>
</html>
